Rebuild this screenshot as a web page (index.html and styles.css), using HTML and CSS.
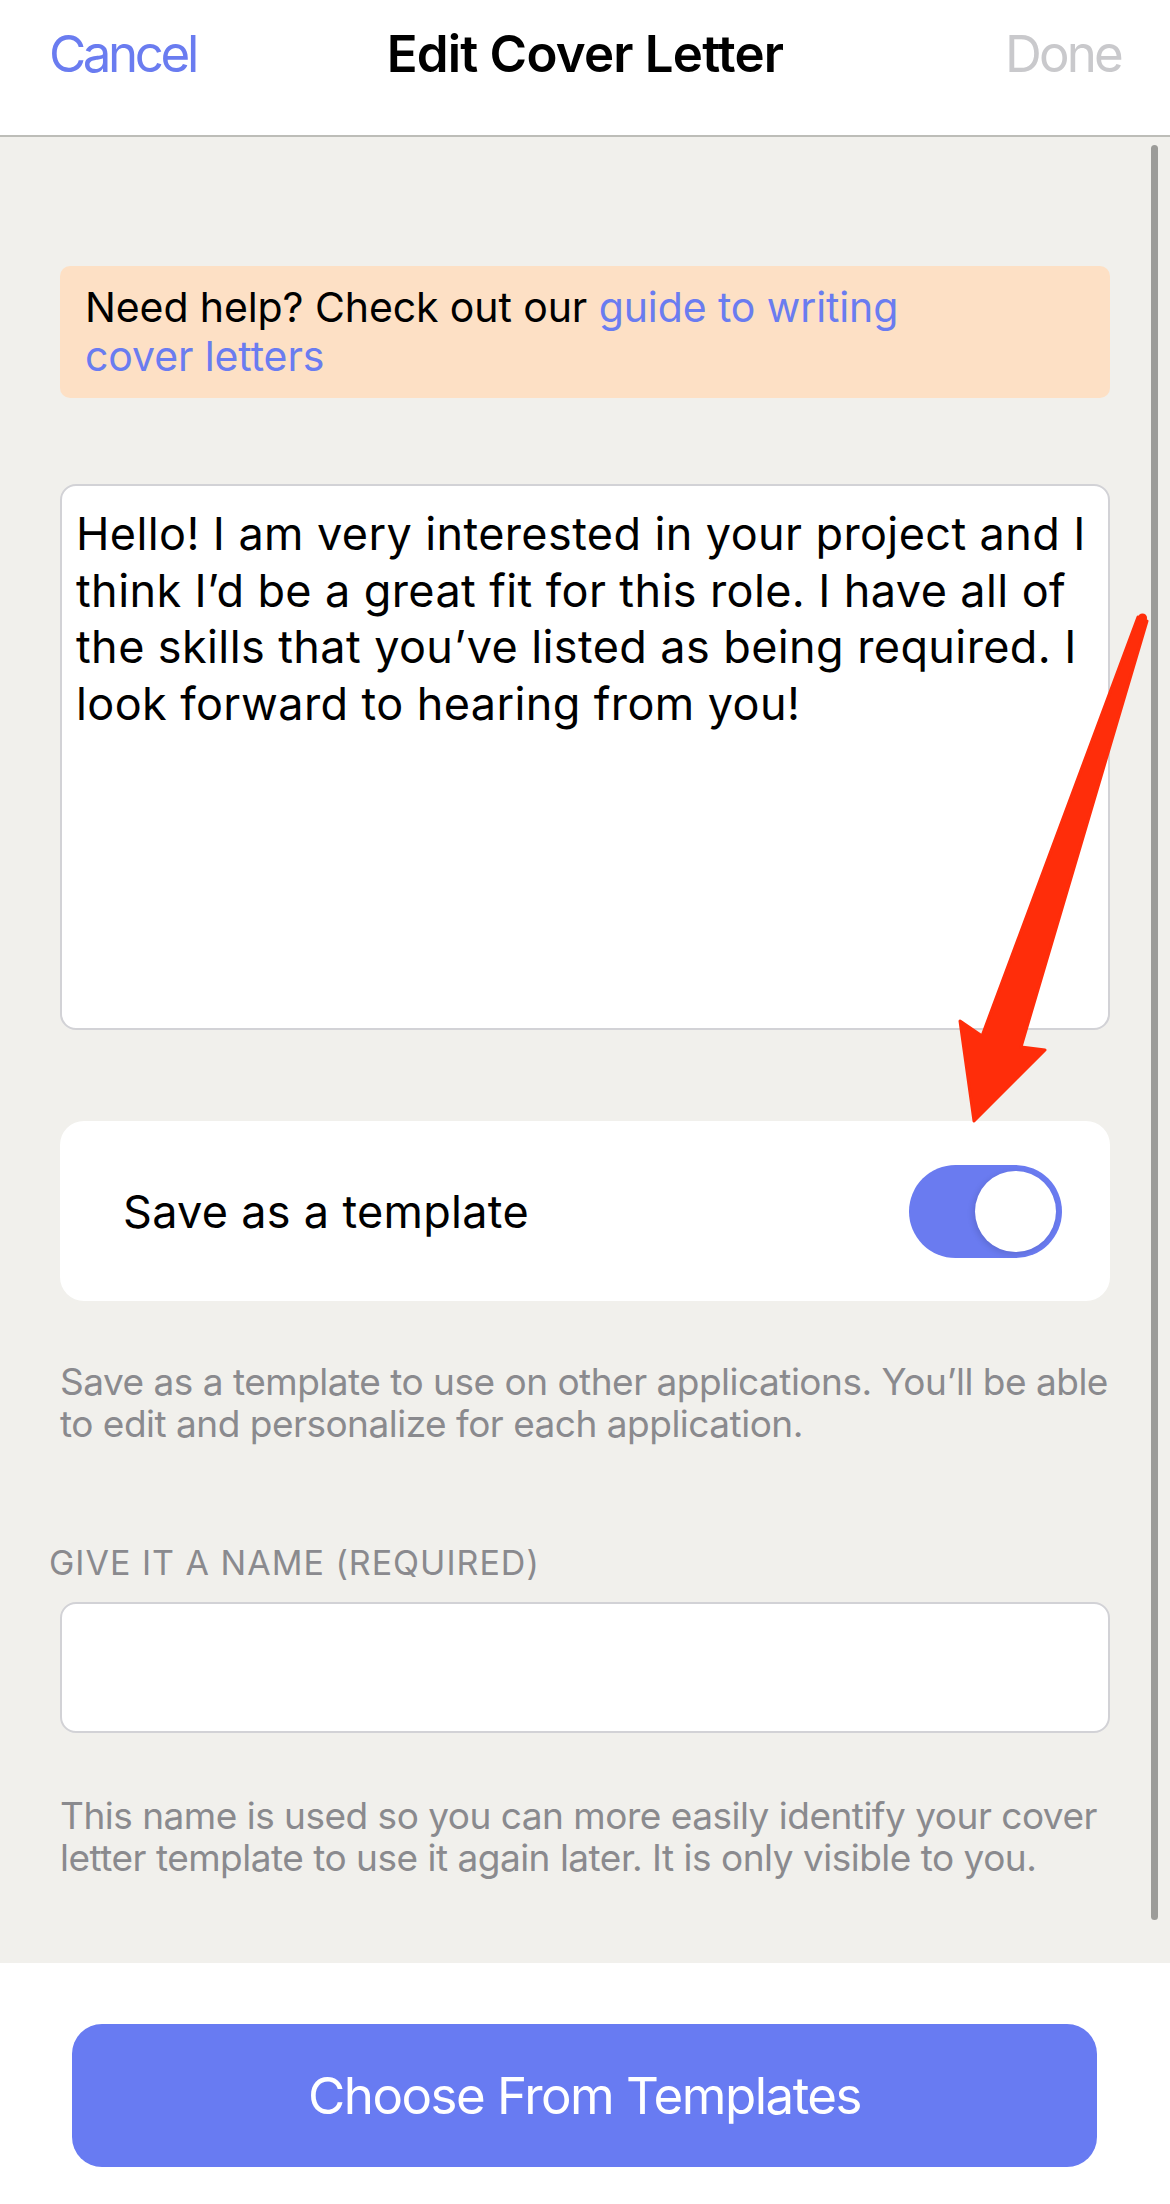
FILE: index.html
```html
<!DOCTYPE html>
<html lang="en">
<head>
    <meta charset="UTF-8">
    <meta name="viewport" content="width=device-width, initial-scale=1.0">
    <title>Edit Cover Letter</title>
    <link rel="stylesheet" href="styles.css">
</head>
<body>
    <div class="screen">
        <nav class="nav">
            <a class="nav-cancel">Cancel</a>
            <h1 class="nav-title">Edit Cover Letter</h1>
            <a class="nav-done">Done</a>
        </nav>

        <main class="content">
            <div class="help-box">
                <p>Need help? Check out our <a class="link">guide to writing cover letters</a></p>
            </div>

            <div class="letter-box">
                <p class="letter-text">Hello! I am very interested in your project and I think I’d be a great fit for this role. I have all of the skills that you’ve listed as being required. I look forward to hearing from you!</p>
            </div>

            <div class="toggle-card">
                <span class="toggle-label">Save as a template</span>
                <div class="switch on">
                    <div class="switch-knob"></div>
                </div>
            </div>

            <p class="hint hint-save">Save as a template to use on other applications. You’ll be able to edit and personalize for each application.</p>

            <label class="field-label">GIVE IT A NAME (REQUIRED)</label>
            <div class="name-input"></div>

            <p class="hint hint-name">This name is used so you can more easily identify your cover letter template to use it again later. It is only visible to you.</p>

            <div class="scroll-indicator"></div>
        </main>

        <footer class="footer">
            <button class="btn-templates">Choose From Templates</button>
        </footer>

        <!-- annotation arrow drawn on top of the screenshot -->
        <svg class="annotation" width="1170" height="2204" viewBox="0 0 1170 2204">
            <path d="M1138 617 L982 1036 L960 1021 L974 1121 L1045 1050 L1021 1047 L1147 621 Z" fill="#ff2d0a" stroke="#ff2d0a" stroke-width="3" stroke-linejoin="round"/>
            <circle cx="1142.5" cy="618" r="4.6" fill="#ff2d0a"/>
        </svg>
    </div>
</body>
</html>
```

FILE: styles.css
```css
*{
    margin: 0px;
    padding: 0px;
    box-sizing: border-box;
}

body{
    font-family: Inter, "Noto Sans", sans-serif;
    background-color: #FFF;
}

.screen{
    position: relative;
    width: 1170px;
    height: 2204px;
    display: flex;
    flex-direction: column;
    overflow: hidden;
}

.nav{
    height: 137px;
    padding: 23px 49px 0px 49px;
    display: grid;
    grid-template-columns: 1fr auto 1fr;
    align-items: start;
    background-color: #FFF;
    border-bottom: 2px solid #bdbdb8;
    font-size: 51px;
    line-height: 62px;
}

.nav-cancel{
    justify-self: start;
    color: #6a7cf0;
    letter-spacing: -3.4px;
}

.nav-title{
    font-size: 51px;
    font-weight: 600;
    color: #000;
    letter-spacing: -0.8px;
}

.nav-done{
    justify-self: end;
    color: #c9c9cc;
    letter-spacing: -2.8px;
}

.content{
    position: relative;
    flex: 1;
    background-color: #f1f0ec;
    padding: 0px 60px;
    display: flex;
    flex-direction: column;
}

.help-box{
    margin-top: 129px;
    height: 132px;
    padding: 17px 25px;
    background-color: #fde0c5;
    border-radius: 10px;
    font-size: 41px;
    line-height: 49px;
    color: #000;
    letter-spacing: -0.1px;
}

.help-box p{
    max-width: 900px;
}

.link{
    color: #6a7cf0;
}

.letter-box{
    margin-top: 86px;
    height: 546px;
    padding: 20px 14px;
    background-color: #FFF;
    border: 2px solid #d2d2d6;
    border-radius: 16px;
}

.letter-text{
    font-size: 45px;
    line-height: 56.7px;
    color: #000;
    letter-spacing: 0.4px;
}

.toggle-card{
    margin-top: 91px;
    height: 180px;
    padding: 0px 48px 0px 63px;
    background-color: #FFF;
    border-radius: 24px;
    display: flex;
    justify-content: space-between;
    align-items: center;
}

.toggle-label{
    font-size: 45px;
    color: #000;
    letter-spacing: 0.3px;
}

.switch{
    width: 153px;
    height: 93px;
    border-radius: 47px;
    background-color: #e4e4e8;
    padding: 6px;
    display: flex;
}

.switch.on{
    background-color: #6a7bf0;
    justify-content: flex-end;
}

.switch-knob{
    width: 81px;
    height: 81px;
    border-radius: 50%;
    background-color: #FFF;
    box-shadow: -2px 2px 6px rgba(0,0,0,0.12);
}

.hint{
    margin-right: -24px;
    font-size: 37px;
    line-height: 42px;
    color: #8a8a8e;
    letter-spacing: -0.5px;
}

.hint-save{
    margin-top: 60px;
}

.field-label{
    margin: 98px -11px 0px -11px;
    font-size: 34px;
    line-height: 40px;
    color: #8a8a8e;
    letter-spacing: 1px;
}

.name-input{
    margin-top: 19px;
    height: 131px;
    background-color: #FFF;
    border: 2px solid #d2d2d6;
    border-radius: 16px;
}

.hint-name{
    margin-top: 62px;
}

.scroll-indicator{
    position: absolute;
    top: 8px;
    right: 12px;
    width: 7px;
    height: 1775px;
    border-radius: 4px;
    background-color: #9c9c99;
}

.footer{
    height: 241px;
    padding: 61px 73px 0px 72px;
    background-color: #FFF;
}

.btn-templates{
    width: 100%;
    height: 143px;
    border: 0px;
    border-radius: 30px;
    background-color: #687bf2;
    color: #FFF;
    font-family: Inter, "Noto Sans", sans-serif;
    font-size: 51px;
    letter-spacing: -1.5px;
}

.annotation{
    position: absolute;
    top: 0px;
    left: 0px;
    pointer-events: none;
}
```
